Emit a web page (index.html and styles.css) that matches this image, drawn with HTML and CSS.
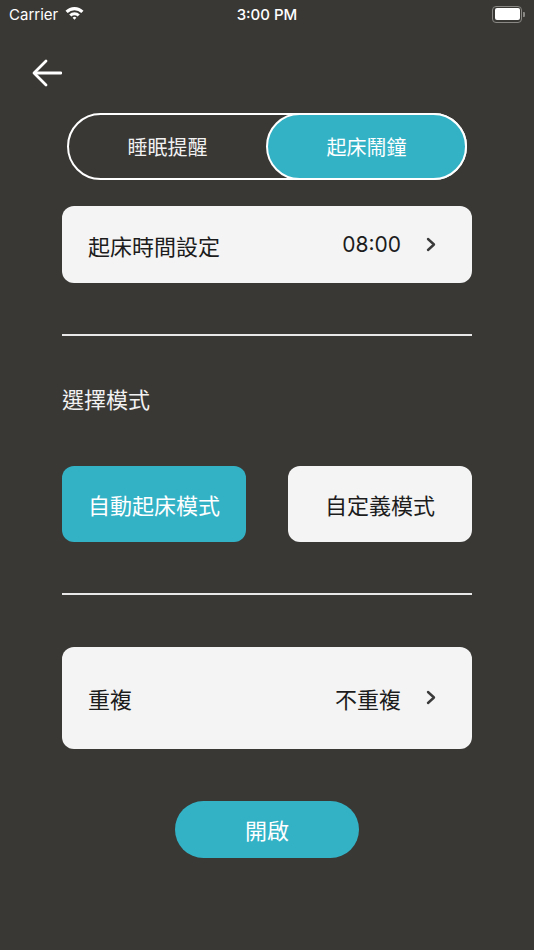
FILE: index.html
```html
<!DOCTYPE html>
<html lang="zh-Hant">
<head>
    <meta charset="UTF-8">
    <meta name="viewport" content="width=device-width, initial-scale=1.0">
    <title>起床鬧鐘</title>
    <link rel="stylesheet" href="styles.css">
</head>
<body>
    <div class="status-bar">
        <div class="status-left">
            <span>Carrier</span>
            <svg class="wifi" width="19" height="14" viewBox="0 0 19 14">
                <path d="M0.5 4.8 A12.5 12.5 0 0 1 18.5 4.8 L16.3 7 A9.5 9.5 0 0 0 2.7 7 Z" fill="#fff"/>
                <path d="M4.2 8.4 A7.5 7.5 0 0 1 14.8 8.4 L12.6 10.6 A4.4 4.4 0 0 0 6.4 10.6 Z" fill="#fff"/>
                <path d="M7.6 11.8 A2.7 2.7 0 0 1 11.4 11.8 L9.5 13.8 Z" fill="#fff"/>
            </svg>
        </div>
        <div class="status-time">3:00 PM</div>
        <div class="status-right">
            <span class="battery"><span class="battery-fill"></span></span>
            <span class="battery-tip"></span>
        </div>
    </div>

    <div class="nav">
        <svg class="back" width="30" height="28" viewBox="0 0 30 28">
            <line x1="3" y1="14" x2="29" y2="14" stroke="#fff" stroke-width="2.8" stroke-linecap="round"/>
            <polyline points="14,2 2,14 14,26" fill="none" stroke="#fff" stroke-width="2.8" stroke-linecap="round" stroke-linejoin="round"/>
        </svg>
    </div>

    <div class="segment">
        <div class="segment-item">睡眠提醒</div>
        <div class="segment-item active">起床鬧鐘</div>
    </div>

    <div class="content">
        <div class="card row time-card">
            <span class="row-label">起床時間設定</span>
            <span class="row-value">08:00</span>
            <svg class="chevron" width="10" height="15" viewBox="0 0 10 15">
                <polyline points="2,2 8,7.5 2,13" fill="none" stroke="#3a3a3a" stroke-width="2.4" stroke-linecap="round" stroke-linejoin="round"/>
            </svg>
        </div>

        <div class="divider"></div>

        <div class="section-title">選擇模式</div>

        <div class="modes">
            <div class="mode active">自動起床模式</div>
            <div class="mode">自定義模式</div>
        </div>

        <div class="divider"></div>

        <div class="card row repeat-card">
            <span class="row-label">重複</span>
            <span class="row-value">不重複</span>
            <svg class="chevron" width="10" height="15" viewBox="0 0 10 15">
                <polyline points="2,2 8,7.5 2,13" fill="none" stroke="#3a3a3a" stroke-width="2.4" stroke-linecap="round" stroke-linejoin="round"/>
            </svg>
        </div>

        <button class="start-btn">開啟</button>
    </div>
</body>
</html>
```

FILE: styles.css
```css
body {
    margin: 0;
    width: 534px;
    height: 950px;
    background-color: #3a3835;
    font-family: "Noto Sans CJK TC", "Noto Sans", sans-serif;
    color: #ffffff;
    overflow: hidden;
}
.status-bar {
    height: 28px;
    display: flex;
    align-items: center;
    justify-content: space-between;
    padding: 0 9px;
    font-family: Inter, "Noto Sans", sans-serif;
    font-size: 15px;
    position: relative;
}
.status-left {
    display: flex;
    align-items: center;
    gap: 7px;
}
.wifi {
    margin-top: -2px;
}
.status-time {
    position: absolute;
    left: 0;
    right: 0;
    text-align: center;
    font-weight: 500;
    pointer-events: none;
}
.status-right {
    display: flex;
    align-items: center;
}
.battery {
    width: 25px;
    height: 12px;
    border: 1.5px solid #8a8885;
    border-radius: 4px;
    padding: 1.5px;
    display: flex;
}
.battery-fill {
    flex: 1;
    background-color: #ffffff;
    border-radius: 2px;
}
.battery-tip {
    width: 2px;
    height: 5px;
    margin-left: 1px;
    background-color: #8a8885;
    border-radius: 0 1px 1px 0;
}
.nav {
    padding: 31px 0 0 32px;
    height: 28px;
    margin-bottom: 26px;
}
.back {
    display: block;
}
.segment {
    margin: 0 67px;
    height: 67px;
    box-sizing: border-box;
    border: 2px solid #ffffff;
    border-radius: 34px;
    display: flex;
}
.segment-item {
    flex: 1;
    display: flex;
    align-items: center;
    justify-content: center;
    font-size: 20px;
    color: #f2f2f2;
}
.segment-item.active {
    background-color: #33b2c6;
    border: 2px solid #ffffff;
    border-radius: 34px;
    margin: -2px -2px -2px 0;
    color: #ffffff;
}
.content {
    padding: 26px 62px 0;
}
.card {
    background-color: #f4f4f4;
    border-radius: 12px;
    color: #1c1c1c;
}
.row {
    display: flex;
    align-items: center;
    padding: 0 36px 0 26px;
    font-size: 22px;
}
.row-label {
    flex: 1;
}
.row-value {
    margin-right: 25px;
}
.time-card {
    height: 77px;
}
.time-card .row-value {
    font-family: Inter, "Noto Sans", sans-serif;
    font-size: 21px;
}
.chevron {
    display: block;
}
.divider {
    height: 1.5px;
    background-color: #e8e8e8;
    margin-top: 51px;
}
.section-title {
    font-size: 22px;
    line-height: 30px;
    margin-top: 47px;
    color: #f2f2f2;
}
.modes {
    display: grid;
    grid-template-columns: 1fr 1fr;
    gap: 42px;
    margin-top: 53.5px;
}
.mode {
    height: 76px;
    border-radius: 12px;
    background-color: #f4f4f4;
    color: #1c1c1c;
    display: flex;
    align-items: center;
    justify-content: center;
    font-size: 22px;
}
.mode.active {
    background-color: #33b2c6;
    color: #ffffff;
}
.repeat-card {
    height: 102px;
    margin-top: 52px;
}
.start-btn {
    display: block;
    margin: 52px auto 0;
    width: 184px;
    height: 57px;
    border: none;
    border-radius: 29px;
    background-color: #33b2c6;
    color: #ffffff;
    font-family: "Noto Sans CJK TC", sans-serif;
    font-size: 22px;
    cursor: pointer;
}
```
